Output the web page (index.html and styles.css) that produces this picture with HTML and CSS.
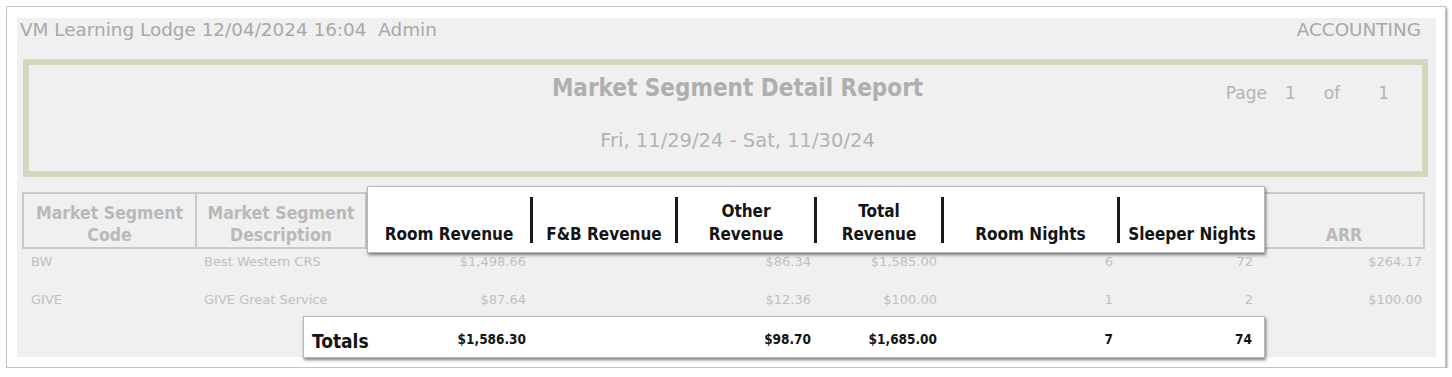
FILE: index.html
```html
<!DOCTYPE html>
<html lang="en">
<head>
<meta charset="utf-8">
<title>Market Segment Detail Report</title>
<link rel="stylesheet" href="styles.css">
</head>
<body>
<div class="frame">
  <div class="sheet">
    <div class="topbar">
      <span>VM Learning Lodge 12/04/2024 16:04&nbsp; Admin</span>
      <span>ACCOUNTING</span>
    </div>

    <div class="titlebox">
      <div class="heading">
        <div class="title">Market Segment Detail Report</div>
        <div class="dates">Fri, 11/29/24 - Sat, 11/30/24</div>
      </div>
      <div class="pageinfo">
        <span>Page</span><span class="n1">1</span><span class="of">of</span><span class="n2">1</span>
      </div>
    </div>

    <div class="report">
      <div class="grid thead">
        <div class="th">Market Segment<br>Code</div>
        <div class="th">Market Segment<br>Description</div>
        <div class="th"></div>
        <div class="th"></div>
        <div class="th"></div>
        <div class="th"></div>
        <div class="th"></div>
        <div class="th"></div>
        <div class="th">ARR</div>
      </div>
      <div class="grid row">
        <div class="c1">BW</div>
        <div class="c2">Best Western CRS</div>
        <div class="num c3">$1,498.66</div>
        <div class="num c4"></div>
        <div class="num c5">$86.34</div>
        <div class="num c6">$1,585.00</div>
        <div class="num c7">6</div>
        <div class="num c8">72</div>
        <div class="num c9">$264.17</div>
      </div>
      <div class="grid row">
        <div class="c1">GIVE</div>
        <div class="c2">GIVE Great Service</div>
        <div class="num c3">$87.64</div>
        <div class="num c4"></div>
        <div class="num c5">$12.36</div>
        <div class="num c6">$100.00</div>
        <div class="num c7">1</div>
        <div class="num c8">2</div>
        <div class="num c9">$100.00</div>
      </div>
    </div>

    <div class="pop pop-head">
      <div class="ph"><span class="lbl">Room Revenue</span></div>
      <div class="ph"><span class="lbl">F&amp;B Revenue</span></div>
      <div class="ph"><span class="lbl">Other<br>Revenue</span></div>
      <div class="ph"><span class="lbl">Total<br>Revenue</span></div>
      <div class="ph"><span class="lbl">Room Nights</span></div>
      <div class="ph"><span class="lbl">Sleeper Nights</span></div>
    </div>

    <div class="pop pop-total">
      <div class="tl">Totals</div>
      <div class="tv c3">$1,586.30</div>
      <div class="tv c4"></div>
      <div class="tv c5">$98.70</div>
      <div class="tv c6">$1,685.00</div>
      <div class="tv c7">7</div>
      <div class="tv c8">74</div>
    </div>
  </div>
</div>
</body>
</html>
```

FILE: styles.css
```css
body {
  margin: 0;
  background: #ffffff;
  font-family: "DejaVu Sans", "Liberation Sans", sans-serif;
}

.frame {
  box-sizing: border-box;
  width: 1440px;
  height: 362px;
  margin: 6px 0 0 6px;
  padding: 11px 9px 10px 10px;
  background: #ffffff;
  border: 1px solid #c4c4c4;
  box-shadow: 1px 2px 2px rgba(0, 0, 0, 0.45);
}

.sheet {
  position: relative;
  height: 100%;
  background: #f0f0f0;
}

.topbar {
  display: flex;
  justify-content: space-between;
  padding: 1px 15px 0 3px;
  font-size: 18.4px;
  line-height: 22px;
  color: #a8a8a8;
}

.titlebox {
  box-sizing: border-box;
  height: 118px;
  margin: 18px 8px 0 6px;
  border: 6px solid #d6d6bf;
  display: grid;
}

.heading,
.pageinfo {
  grid-area: 1 / 1;
}

.heading {
  padding: 8px 0 0 24px;
  text-align: center;
}

.title {
  font-family: "DejaVu Sans Condensed", "DejaVu Sans", sans-serif;
  font-weight: bold;
  font-size: 24px;
  line-height: 30px;
  color: #afafaf;
}

.dates {
  margin-top: 26px;
  font-size: 19.5px;
  line-height: 24px;
  color: #b3b3b3;
}

.pageinfo {
  justify-self: end;
  align-self: start;
  display: flex;
  padding: 17px 33px 0 0;
  font-size: 17px;
  line-height: 22px;
  color: #b4b4b4;
}

.pageinfo .n1 { margin-left: 18px; }
.pageinfo .of { margin-left: 28px; }
.pageinfo .n2 { margin-left: 38px; }

.report {
  margin: 15px 11px 0 5px;
}

.grid {
  display: grid;
  grid-template-columns: 175px 170px 164px 145px 139px 127px 175px 148px 160px;
}

.th {
  box-sizing: border-box;
  height: 57px;
  border: 2px solid #cacaca;
  border-left: 0;
  padding-bottom: 1px;
  display: flex;
  align-items: flex-end;
  justify-content: center;
  text-align: center;
  font-family: "DejaVu Sans Condensed", "DejaVu Sans", sans-serif;
  font-weight: bold;
  font-size: 17.5px;
  line-height: 22px;
  color: #b9b9b9;
}

.th:first-child {
  border-left: 2px solid #cacaca;
}

.row {
  box-sizing: border-box;
  height: 38px;
  padding-top: 3px;
  font-size: 13px;
  line-height: 20px;
  color: #c0c0c0;
}

.c1 { padding-left: 9px; }
.c2 { padding-left: 7px; }
.num { text-align: right; }
.c3 { padding-right: 5px; }
.c4 { padding-right: 5px; }
.c5 { padding-right: 4px; }
.c6 { padding-right: 5px; }
.c7 { padding-right: 4px; }
.c8 { padding-right: 12px; }
.c9 { padding-right: 3px; }

.pop {
  position: absolute;
  box-sizing: border-box;
  background: #ffffff;
  border: 1px solid #b8b8b8;
  box-shadow: 1px 2px 3px rgba(0, 0, 0, 0.5);
}

.pop-head {
  left: 350px;
  top: 168px;
  width: 898px;
  height: 67px;
  padding-top: 10px;
  display: grid;
  grid-template-columns: 162px 145px 139px 127px 176px 147px;
  align-items: start;
}

.ph {
  height: 46px;
  display: flex;
  align-items: flex-end;
  justify-content: center;
  text-align: center;
  font-family: "DejaVu Sans Condensed", "DejaVu Sans", sans-serif;
  font-weight: bold;
  font-size: 17px;
  line-height: 23px;
  color: #141414;
}

.ph + .ph {
  border-left: 3px solid #1a1a1a;
}

.lbl {
  margin-bottom: -3px;
}

.pop-total {
  left: 286px;
  top: 298px;
  width: 962px;
  height: 42px;
  padding-top: 12px;
  display: grid;
  grid-template-columns: 63px 164px 145px 139px 127px 175px 147px;
  align-items: start;
}

.tl {
  padding-left: 8px;
  font-family: "DejaVu Sans Condensed", "DejaVu Sans", sans-serif;
  font-weight: bold;
  font-size: 19px;
  line-height: 24px;
  color: #141414;
}

.tv {
  text-align: right;
  font-family: "DejaVu Sans Condensed", "DejaVu Sans", sans-serif;
  font-weight: bold;
  font-size: 13.5px;
  line-height: 20px;
  color: #141414;
}
```
